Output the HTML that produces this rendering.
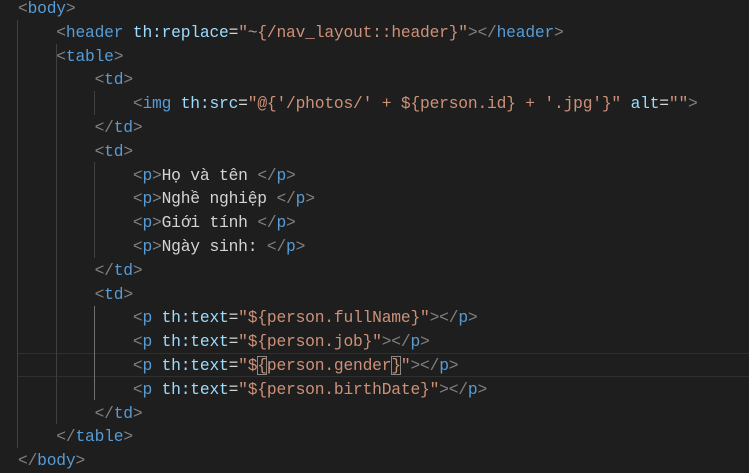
<!DOCTYPE html>
<html><head><meta charset="utf-8"><style>
html,body{margin:0;padding:0;background:#1e1e1e;width:749px;height:472px;overflow:hidden}
.code{position:absolute;left:18px;top:-3px;font-family:"Liberation Mono","DejaVu Sans Mono",monospace;font-size:16.3px;line-height:23.8px;color:#d4d4d4;letter-spacing:-0.2px}
.l{height:23.8px;white-space:pre}
.b{color:#808080}.t{color:#569cd6}.a{color:#9cdcfe}.s{color:#ce9178}
.g{position:absolute;width:1px;background:#404040}
.cur{position:absolute;left:17px;right:0;top:353px;height:22px;border-top:1px solid #2f2f2f;border-bottom:1px solid #2f2f2f}
.bx{outline:1px solid #888;outline-offset:-1px}
</style></head><body>
<div class="cur"></div>
<div class="g" style="left:17px;top:20px;height:428px"></div>
<div class="g" style="left:56px;top:44px;height:380px"></div>
<div class="g" style="left:94px;top:91px;height:24px"></div>
<div class="g" style="left:94px;top:162px;height:96px"></div>
<div class="g" style="left:94px;top:306px;height:94px;background:#707070"></div>
<div class="code"><div class="l"><span class="b">&lt;</span><span class="t">body</span><span class="b">&gt;</span></div><div class="l">    <span class="b">&lt;</span><span class="t">header</span> <span class="a">th:replace</span>=<span class="s">"~{/nav_layout::header}"</span><span class="b">&gt;&lt;/</span><span class="t">header</span><span class="b">&gt;</span></div><div class="l">    <span class="b">&lt;</span><span class="t">table</span><span class="b">&gt;</span></div><div class="l">        <span class="b">&lt;</span><span class="t">td</span><span class="b">&gt;</span></div><div class="l">            <span class="b">&lt;</span><span class="t">img</span> <span class="a">th:src</span>=<span class="s">"@{'/photos/' + ${person.id} + '.jpg'}"</span> <span class="a">alt</span>=<span class="s">""</span><span class="b">&gt;</span></div><div class="l">        <span class="b">&lt;/</span><span class="t">td</span><span class="b">&gt;</span></div><div class="l">        <span class="b">&lt;</span><span class="t">td</span><span class="b">&gt;</span></div><div class="l">            <span class="b">&lt;</span><span class="t">p</span><span class="b">&gt;</span>Họ và tên <span class="b">&lt;/</span><span class="t">p</span><span class="b">&gt;</span></div><div class="l">            <span class="b">&lt;</span><span class="t">p</span><span class="b">&gt;</span>Nghề nghiệp <span class="b">&lt;/</span><span class="t">p</span><span class="b">&gt;</span></div><div class="l">            <span class="b">&lt;</span><span class="t">p</span><span class="b">&gt;</span>Giới tính <span class="b">&lt;/</span><span class="t">p</span><span class="b">&gt;</span></div><div class="l">            <span class="b">&lt;</span><span class="t">p</span><span class="b">&gt;</span>Ngày sinh: <span class="b">&lt;/</span><span class="t">p</span><span class="b">&gt;</span></div><div class="l">        <span class="b">&lt;/</span><span class="t">td</span><span class="b">&gt;</span></div><div class="l">        <span class="b">&lt;</span><span class="t">td</span><span class="b">&gt;</span></div><div class="l">            <span class="b">&lt;</span><span class="t">p</span> <span class="a">th:text</span>=<span class="s">"${person.fullName}"</span><span class="b">&gt;&lt;/</span><span class="t">p</span><span class="b">&gt;</span></div><div class="l">            <span class="b">&lt;</span><span class="t">p</span> <span class="a">th:text</span>=<span class="s">"${person.job}"</span><span class="b">&gt;&lt;/</span><span class="t">p</span><span class="b">&gt;</span></div><div class="l">            <span class="b">&lt;</span><span class="t">p</span> <span class="a">th:text</span>=<span class="s">"$<span class="bx">{</span>person.gender<span class="bx">}</span>"</span><span class="b">&gt;&lt;/</span><span class="t">p</span><span class="b">&gt;</span></div><div class="l">            <span class="b">&lt;</span><span class="t">p</span> <span class="a">th:text</span>=<span class="s">"${person.birthDate}"</span><span class="b">&gt;&lt;/</span><span class="t">p</span><span class="b">&gt;</span></div><div class="l">        <span class="b">&lt;/</span><span class="t">td</span><span class="b">&gt;</span></div><div class="l">    <span class="b">&lt;/</span><span class="t">table</span><span class="b">&gt;</span></div><div class="l"><span class="b">&lt;/</span><span class="t">body</span><span class="b">&gt;</span></div></div>
</body></html>
